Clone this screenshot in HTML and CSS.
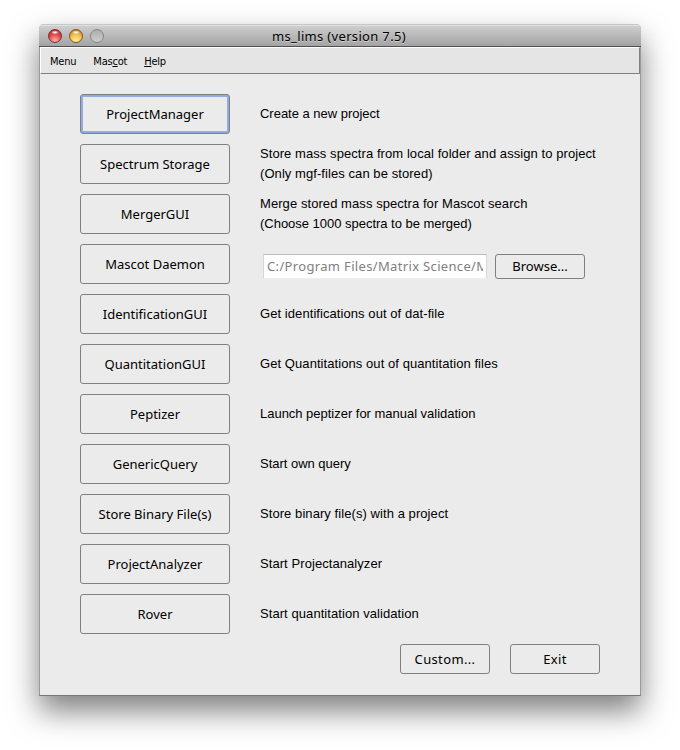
FILE: index.html
```html
<!DOCTYPE html>
<html lang="en">
<head>
<meta charset="utf-8">
<title>ms_lims (version 7.5)</title>
<link rel="stylesheet" href="styles.css">
</head>
<body>
<main class="window">
  <header class="titlebar">
    <div class="lights"><span class="light red"></span><span class="light amber"></span><span class="light off"></span></div>
    <h1>ms_lims (version 7.5)</h1>
  </header>
  <nav class="menubar"><span>Menu</span><span>Mas<u>c</u>ot</span><span><u>H</u>elp</span></nav>
  <section class="content">
    <div class="row"><button class="btn focused">ProjectManager</button><p class="tight">Create a new project</p></div>
    <div class="row"><button class="btn">Spectrum Storage</button><p>Store mass spectra from local folder and assign to project<br>(Only mgf-files can be stored)</p></div>
    <div class="row"><button class="btn">MergerGUI</button><p>Merge stored mass spectra for Mascot search<br><span class="tight">(Choose 1000 spectra to be merged)</span></p></div>
    <div class="row"><button class="btn">Mascot Daemon</button><div class="path"><span>C:/Program Files/Matrix Science/M</span></div><button class="btn browse">Browse...</button></div>
    <div class="row"><button class="btn">IdentificationGUI</button><p>Get identifications out of dat-file</p></div>
    <div class="row"><button class="btn">QuantitationGUI</button><p>Get Quantitations out of quantitation files</p></div>
    <div class="row"><button class="btn">Peptizer</button><p class="tight">Launch peptizer for manual validation</p></div>
    <div class="row"><button class="btn">GenericQuery</button><p class="tight">Start own query</p></div>
    <div class="row"><button class="btn">Store Binary File(s)</button><p>Store binary file(s) with a project</p></div>
    <div class="row"><button class="btn">ProjectAnalyzer</button><p>Start Projectanalyzer</p></div>
    <div class="row"><button class="btn">Rover</button><p>Start quantitation validation</p></div>
    <footer class="actions"><button class="btn small">Custom...</button><button class="btn small exit">Exit</button></footer>
  </section>
</main>
</body>
</html>
```

FILE: styles.css
```css
* { box-sizing: border-box; }
body { margin: 0; height: 750px; overflow: hidden; background: #fff; font-family: "Noto Sans", sans-serif; color: #000; }
.window {
  width: 602px; height: 672px; margin: 24px 0 0 39px;
  border: 1px solid #999; border-top: 0; border-bottom-color: #777;
  border-radius: 5px 5px 0 0; background: #ebebeb;
  box-shadow: 0 15px 30px rgba(0, 0, 0, .5);
}
.titlebar {
  height: 23px; margin: 0 -1px; display: grid; grid-template-columns: 80px 1fr 80px; align-items: center;
  border-radius: 5px 5px 0 0; border-bottom: 1px solid #515151;
  background: linear-gradient(#c8c8c8 0 1px, #e0e0e0 1px 2px, #cecece 2px, #a3a3a3);
}
.lights { display: flex; gap: 7px; padding: 2px 0 0 9px; }
.light { width: 14px; height: 14px; border-radius: 50%; border: 1px solid #7b3030; }
.red { background: radial-gradient(ellipse 4px 2px at 50% 20%, #fff 10%, transparent), radial-gradient(circle at 50% 90%, #ffb5b2, #e64a48 50%, #a92020); }
.amber { border-color: #86531d; background: radial-gradient(ellipse 4px 2px at 50% 20%, #fff 10%, transparent), radial-gradient(circle at 50% 90%, #fff295, #f2b849 55%, #b8661d); }
.off { border-color: #858585; background: linear-gradient(#adadad, #cecece); }
h1 { margin: 0; text-align: center; font-size: 13px; line-height: 20px; font-weight: 400; letter-spacing: .33px; padding: 2px 2px 0 0; text-shadow: 0 1px #d0d0d0; white-space: nowrap; }
.menubar {
  height: 27px; display: flex; gap: 17px; padding: 1px 0 0 9px; align-items: center;
  border: 1px solid #808080; border-color: #fff #808080 #808080 #fff; background: #e5e5e5;
  font-family: "DejaVu Sans Condensed", "DejaVu Sans", sans-serif; font-size: 11px; letter-spacing: -.22px;
}
.menubar u { text-underline-offset: 1px; text-decoration-thickness: 1px; }
.content { padding: 20px 40px 0; display: flex; flex-direction: column; gap: 10px; }
.row { height: 40px; display: flex; align-items: center; }
.btn { width: 150px; height: 40px; flex: none; padding: 0 0 1px; border: 1px solid #808080; border-radius: 3px; background: #ebebeb; color: #000; font: 13px/20px "Noto Sans", sans-serif; white-space: nowrap; }
.focused { box-shadow: inset 0 0 0 1px #8cabe0, inset 0 0 0 2px #91aee0, inset 0 -2px #507fcd; }
.row p { margin: 0 0 0 30px; font: 13px/20px "Liberation Sans", sans-serif; letter-spacing: .07px; white-space: nowrap; }
.row p.tight, .row .tight { letter-spacing: -.02px; }
.path { width: 224px; height: 25px; margin: 5px 8px 0 33px; padding: 0 3px; background: #fff; border: 1px solid #d8d8d8; border-top-color: #bdbdbd; border-bottom-color: #f0f0f0; color: #808080; font-size: 13px; line-height: 23px; letter-spacing: .34px; }
.path span { display: block; overflow: hidden; white-space: nowrap; }
.browse { height: 25px; width: 90px; margin-top: 5px; padding: 0 0 1px; line-height: 18px; }
.actions { display: flex; justify-content: flex-end; gap: 20px; }
.small { width: 90px; height: 30px; letter-spacing: .35px; }
```
